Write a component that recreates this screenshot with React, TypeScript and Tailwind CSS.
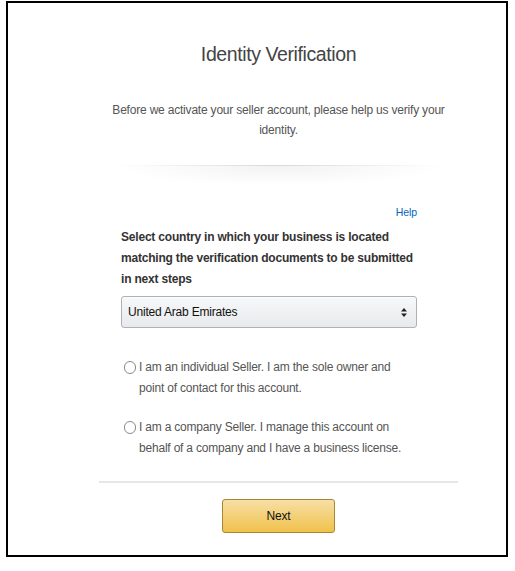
const font = "font-['Liberation_Sans',Arial,sans-serif]";

function Radio({ lines }: { lines: string[] }) {
  return (
    <label className="flex items-start ml-[3px] text-[12px] tracking-[-0.2px] leading-[21px] text-[#555]">
      <span className="mt-[4px] w-[12px] h-[13px] shrink-0 rounded-full border border-[#8a8a8a] bg-white" />
      <span className="ml-[3px] whitespace-nowrap">
        {lines.map((l) => (
          <span key={l} className="block">
            {l}
          </span>
        ))}
      </span>
    </label>
  );
}

export default function App() {
  return (
    <div className={`min-h-screen bg-white pt-px pl-[6px] ${font}`}>
      <div className="w-[502px] h-[556px] border-2 border-black">
        <div className="ml-[91px] w-[359px] flex flex-col">
          {/* Header */}
          <h1 className="mt-[36px] text-center text-[19.5px] tracking-[-0.4px] leading-[30px] text-[#444]">
            Identity Verification
          </h1>
          <p className="mt-[31px] text-center text-[12px] tracking-[-0.2px] leading-[20px] text-[#555] whitespace-nowrap">
            Before we activate your seller account, please help us verify your
            <br />
            identity.
          </p>

          {/* Shadow divider */}
          <div className="mt-[25px] mx-auto w-[330px]">
            <div className="h-px bg-[linear-gradient(to_right,transparent,#d8d8d8_50%,transparent)]" />
            <div className="h-[20px] bg-[radial-gradient(ellipse_at_top,rgba(0,0,0,0.05),transparent_70%)]" />
          </div>

          {/* Form */}
          <div className="ml-[22px] w-[296px] flex flex-col">
            <a className="mt-[18px] self-end text-[10.5px] tracking-[-0.1px] leading-[16px] text-[#0066c0]">Help</a>
            <div className="mt-[7px] text-[12px] tracking-[-0.2px] leading-[21px] font-bold text-[#333] whitespace-nowrap">
              Select country in which your business is located
              <br />
              matching the verification documents to be submitted
              <br />
              in next steps
            </div>
            <div className="mt-[6px] h-[32px] flex items-center justify-between pl-[6px] pr-[9px] rounded-[3px] border border-[#adb1b8] bg-[linear-gradient(to_bottom,#f7f8fa,#e7e9ec)] shadow-[0_1px_0_rgba(255,255,255,0.6)_inset] text-[12px] tracking-[-0.2px] text-[#111]">
              <span>United Arab Emirates</span>
              <svg width="6" height="9" viewBox="0 0 6 9">
                <path d="M3 0L6 3.5H0z" fill="#222" />
                <path d="M3 9L0 5.5h6z" fill="#222" />
              </svg>
            </div>
            <div className="mt-[29px]">
              <Radio lines={["I am an individual Seller. I am the sole owner and", "point of contact for this account."]} />
            </div>
            <div className="mt-[18px]">
              <Radio lines={["I am a company Seller. I manage this account on", "behalf of a company and I have a business license."]} />
            </div>
          </div>

          <div className="mt-[22px] h-[2px] bg-[#e7e7e7]" />

          <button className="mt-[16px] mx-auto w-[113px] h-[34px] rounded-[3px] border border-[#a88734] bg-[linear-gradient(to_bottom,#f7dfa5,#f0c14b)] text-[12px] tracking-[-0.2px] text-[#111]">
            Next
          </button>
        </div>
      </div>
    </div>
  );
}
